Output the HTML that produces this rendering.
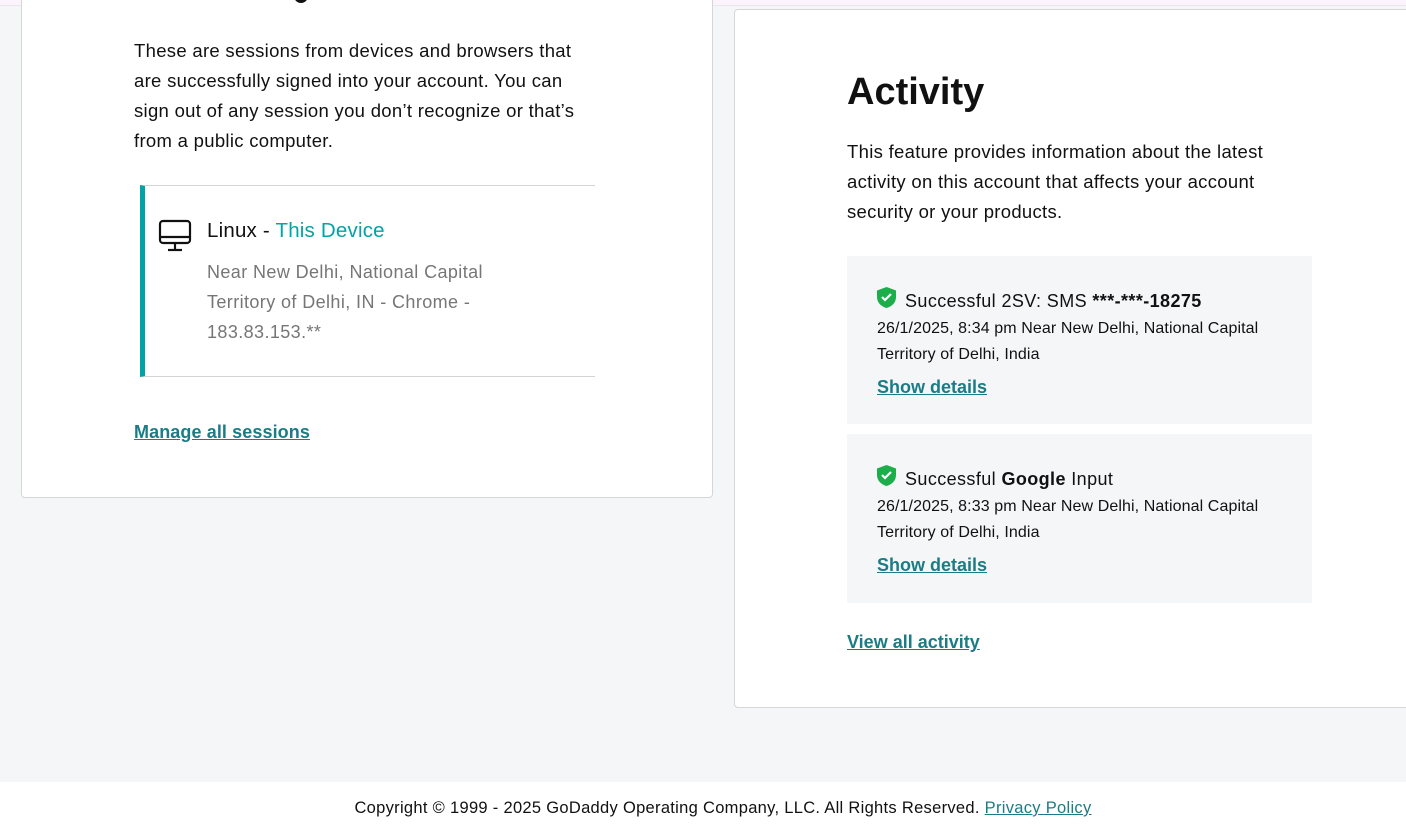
<!DOCTYPE html>
<html><head><meta charset="utf-8"><style>
*{margin:0;padding:0;box-sizing:border-box}
body{width:1406px;height:836px;overflow:hidden;background:#f5f6f8;font-family:"Liberation Sans",sans-serif;color:#111;position:relative}
.top{position:absolute;left:0;top:0;width:1406px;height:6px;background:#fcf4fc;border-bottom:1px solid #eee4ee}
.card{position:absolute;background:#fff;border:1px solid #d6d6d6;border-radius:4px}
.p{font-size:18.5px;line-height:30px;color:#111;letter-spacing:0.3px;white-space:nowrap}
a{color:#1a7c85;text-decoration:underline;font-weight:bold}
.sess{position:absolute;left:118px;top:194px;width:455px;height:192px;border-top:1px solid #d4d4d4;border-bottom:1px solid #d4d4d4;border-left:5px solid #00a4a6}
.act{position:absolute;left:112px;width:465px;background:#f5f6f8;padding:0 30px;white-space:nowrap}
.act .t{font-size:18px;margin-top:35px;display:flex;align-items:center;letter-spacing:0.4px}
.act .d{font-size:16px;line-height:26px;margin-top:4px;letter-spacing:0.1px}
.footer{position:absolute;left:0;top:782px;width:1406px;height:54px;background:#fff;text-align:center;font-size:16.5px;line-height:52px;letter-spacing:0.3px;padding-left:40px}
</style></head><body>
<div class="top"></div>
<div class="card" style="left:21px;top:-10px;width:692px;height:508px">
  <div style="position:absolute;left:272px;top:-2px;width:14px;height:14px;border-radius:7px;background:#111"></div>
  <div class="p" style="position:absolute;left:112px;top:45px;width:480px">These are sessions from devices and browsers that<br>are successfully signed into your account. You can<br>sign out of any session you don’t recognize or that’s<br>from a public computer.</div>
  <div class="sess">
    <svg style="position:absolute;left:13px;top:33px" width="34" height="34" viewBox="0 0 34 34" fill="none" stroke="#111" stroke-width="2.2"><rect x="2" y="2" width="30" height="22" rx="3"/><line x1="2" y1="18" x2="32" y2="18"/><line x1="17" y1="24" x2="17" y2="30"/><line x1="10" y1="31" x2="24" y2="31"/></svg>
    <div style="position:absolute;left:62px;top:33px;font-size:20.5px;letter-spacing:0.2px">Linux - <span style="color:#00a4a6">This Device</span></div>
    <div style="position:absolute;left:62px;top:71px;font-size:18px;line-height:30px;color:#767676;letter-spacing:0.4px;white-space:nowrap">Near New Delhi, National Capital<br>Territory of Delhi, IN - Chrome -<br>183.83.153.**</div>
  </div>
  <a style="position:absolute;left:112px;top:431px;font-size:18px;letter-spacing:0.1px">Manage all sessions</a>
</div>
<div class="card" style="left:734px;top:9px;width:690px;height:699px">
  <div style="position:absolute;left:112px;top:61px;font-size:38px;font-weight:bold">Activity</div>
  <div class="p" style="position:absolute;left:112px;top:127px;width:460px">This feature provides information about the latest<br>activity on this account that affects your account<br>security or your products.</div>
  <div class="act" style="top:246px;height:168px">
    <div class="t"><svg width="19" height="21" viewBox="0 0 19 21" style="margin-top:-8px"><path d="M9.5 0L19 3.5V10c0 5.5-4 9.5-9.5 11C4 19.5 0 15.5 0 10V3.5Z" fill="#1bae4b"/><path d="M5 10l3 3 6-6" stroke="#fff" stroke-width="2.2" fill="none"/></svg><span style="margin-left:9px">Successful 2SV: SMS <b>***-***-18275</b></span></div>
    <div class="d">26/1/2025, 8:34 pm Near New Delhi, National Capital<br>Territory of Delhi, India</div>
    <a style="display:block;font-size:18px;margin-top:9px">Show details</a>
  </div>
  <div class="act" style="top:424px;height:169px">
    <div class="t"><svg width="19" height="21" viewBox="0 0 19 21" style="margin-top:-8px"><path d="M9.5 0L19 3.5V10c0 5.5-4 9.5-9.5 11C4 19.5 0 15.5 0 10V3.5Z" fill="#1bae4b"/><path d="M5 10l3 3 6-6" stroke="#fff" stroke-width="2.2" fill="none"/></svg><span style="margin-left:9px">Successful <b>Google</b> Input</span></div>
    <div class="d">26/1/2025, 8:33 pm Near New Delhi, National Capital<br>Territory of Delhi, India</div>
    <a style="display:block;font-size:18px;margin-top:9px">Show details</a>
  </div>
  <a style="position:absolute;left:112px;top:622px;font-size:18px">View all activity</a>
</div>
<div class="footer">Copyright © 1999 - 2025 GoDaddy Operating Company, LLC. All Rights Reserved. <a style="font-weight:normal">Privacy Policy</a></div>
</body></html>
